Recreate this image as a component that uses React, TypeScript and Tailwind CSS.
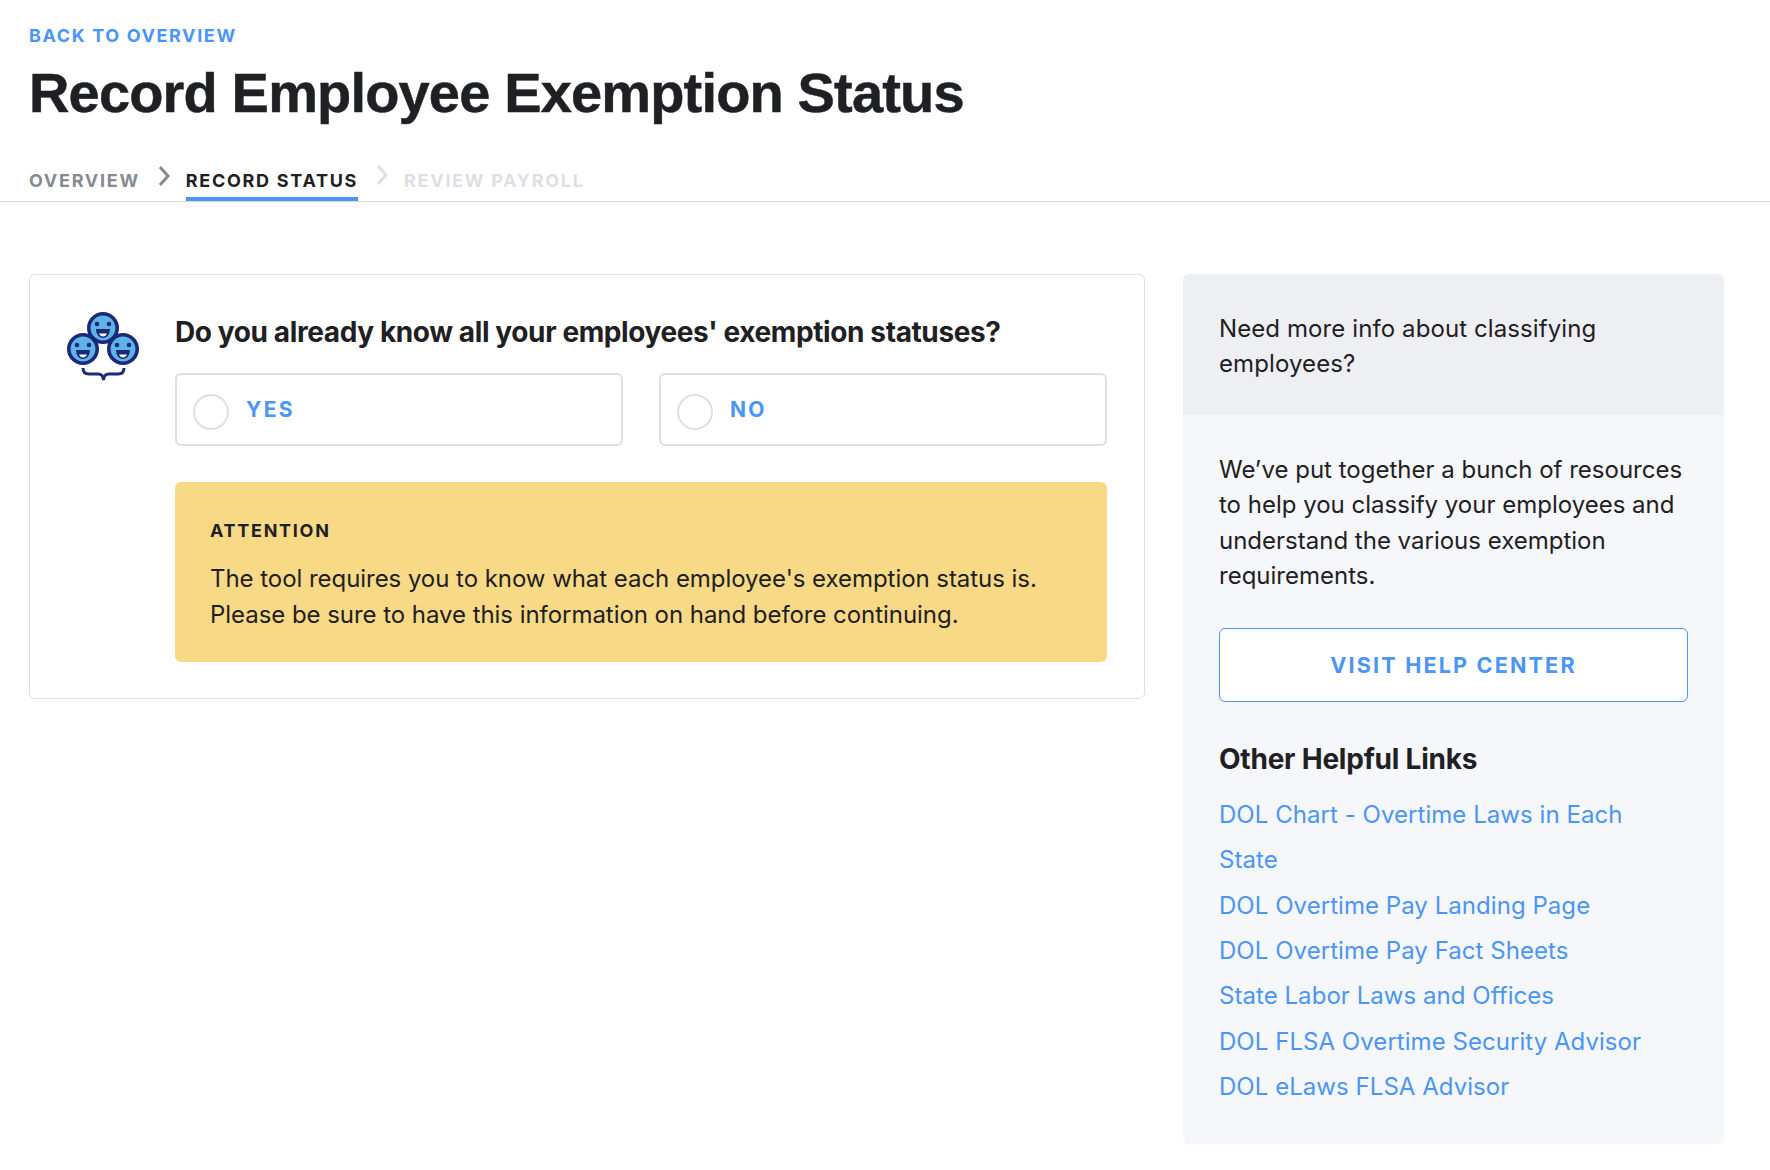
import React from "react";

const links = [
  "DOL Chart - Overtime Laws in Each State",
  "DOL Overtime Pay Landing Page",
  "DOL Overtime Pay Fact Sheets",
  "State Labor Laws and Offices",
  "DOL FLSA Overtime Security Advisor",
  "DOL eLaws FLSA Advisor",
];

const Face = ({ cx, cy }: { cx: number; cy: number }) => (
  <g>
    <circle cx={cx} cy={cy} r="14.2" fill="#5fb3e6" stroke="#1b2a78" strokeWidth="3.6" />
    <circle cx={cx - 6} cy={cy - 4} r="2.3" fill="#1b2a78" />
    <circle cx={cx + 6} cy={cy - 4} r="2.3" fill="#1b2a78" />
    <path d={`M${cx - 7} ${cy + 1}h14c0 5-3 9-7 9s-7-4-7-9z`} fill="#1b2a78" />
    <path d={`M${cx - 4} ${cy + 5.5}h8c-.8 2-2.2 3-4 3s-3.2-1-4-3z`} fill="#fff" />
  </g>
);

const Chevron = ({ className }: { className: string }) => (
  <svg width="12" height="20" viewBox="0 0 12 20" fill="none" className={className}>
    <path d="M2 1l8 9-8 9" stroke="currentColor" strokeWidth="3" />
  </svg>
);

const RadioCard = ({ label }: { label: string }) => (
  <div className="flex h-[73px] flex-1 items-center rounded-md border-2 border-[#dddfe5] pl-[16px]">
    <span className="mt-[4px] h-9 w-9 rounded-full border-2 border-[#dddfe5]" />
    <span className="ml-[17px] text-[21px] font-bold tracking-[0.11em] text-[#4a95f5]">{label}</span>
  </div>
);

export default function App() {
  return (
    <div className="min-h-screen bg-white font-['Inter',sans-serif] text-[#1f2023]">
      <div className="border-b border-[#d9dadd] pl-[29px]">
        <a className="block pt-[26px] text-[18px] leading-5 font-bold tracking-[0.09em] text-[#4a95f5]">
          BACK TO OVERVIEW
        </a>
        <h1 className="mt-[13px] font-['Liberation_Sans',sans-serif] text-[56px] leading-[68px] font-bold tracking-[-0.015em] [-webkit-text-stroke:0.5px_#1f2023]">
          Record Employee Exemption Status
        </h1>
        <div className="mt-[40px] flex h-[34px] items-start text-[18px] leading-5 font-bold tracking-[0.095em]">
          <span className="mt-[4px] text-[#868a92]">OVERVIEW</span>
          <Chevron className="mt-[-1px] ml-[18px] text-[#868a92]" />
          <span className="relative ml-[16px] h-[34px] pt-[4px]">
            RECORD STATUS
            <span className="absolute right-0 bottom-0 left-0 h-1 bg-[#4a95f5]" />
          </span>
          <Chevron className="mt-[-2px] ml-[18px] text-[#dddfe5]" />
          <span className="mt-[4px] ml-[16px] text-[#dddfe5]">REVIEW PAYROLL</span>
        </div>
      </div>

      <div className="flex items-start gap-[38px] pt-[72px] pl-[29px]">
        <div className="flex h-[425px] w-[1116px] rounded-md border border-[#dddfe5] pt-[37px] pr-[37px] pl-[37px]">
          <svg width="72" height="70" viewBox="0 0 72 70" className="shrink-0">
            <Face cx={36} cy={16} />
            <Face cx={16} cy={37} />
            <Face cx={56} cy={37} />
            <path d="M16 56c0 5 3 6 6 6h9c3 0 5 1 5.500 6 .5-5 2.500-6 5.500-6h9c3 0 6-1 6-6" fill="none" stroke="#1b2a78" strokeWidth="3" />
          </svg>
          <div className="ml-[36px] flex-1">
            <h2 className="mt-[2px] text-[28px] leading-[36px] font-bold tracking-[-0.014em]">
              Do you already know all your employees' exemption statuses?
            </h2>
            <div className="mt-[23px] flex gap-9">
              <RadioCard label="YES" />
              <RadioCard label="NO" />
            </div>
            <div className="mt-[36px] h-[180px] rounded-md bg-[#f8da86] px-[35px] pt-[39px]">
              <p className="text-[18px] leading-5 font-bold tracking-[0.095em]">ATTENTION</p>
              <p className="mt-[20px] text-[24px] leading-9 tracking-[-0.002em]">
                The tool requires you to know what each employee's exemption status is. Please be sure to have this information on hand before continuing.
              </p>
            </div>
          </div>
        </div>

        <aside className="w-[541px] overflow-hidden rounded-md bg-[#f6f7fb]">
          <div className="h-[141px] bg-[#eeeff3] px-9 pt-[37px] text-[24px] leading-[35px] tracking-[0.004em]">
            Need more info about classifying employees?
          </div>
          <div className="px-9 pt-[37px] pb-[35px]">
            <p className="text-[24px] leading-[35.3px] tracking-[0em]">
              We’ve put together a bunch of resources to help you classify your employees and understand the various exemption requirements.
            </p>
            <button className="mt-[35px] h-[74px] w-full rounded-md border border-[#4a95f5] bg-white text-[21.6px] font-bold tracking-[0.1em] text-[#4a95f5]">
              VISIT HELP CENTER
            </button>
            <h3 className="mt-[39px] text-[28px] leading-9 font-bold tracking-[-0.008em]">Other Helpful Links</h3>
            <ul className="mt-[15px] pr-[20px]">
              {links.map((link) => (
                <li key={link} className="text-[24px] leading-[45.3px] tracking-[0.002em] text-[#4a95f5]">
                  {link}
                </li>
              ))}
            </ul>
          </div>
        </aside>
      </div>
    </div>
  );
}
